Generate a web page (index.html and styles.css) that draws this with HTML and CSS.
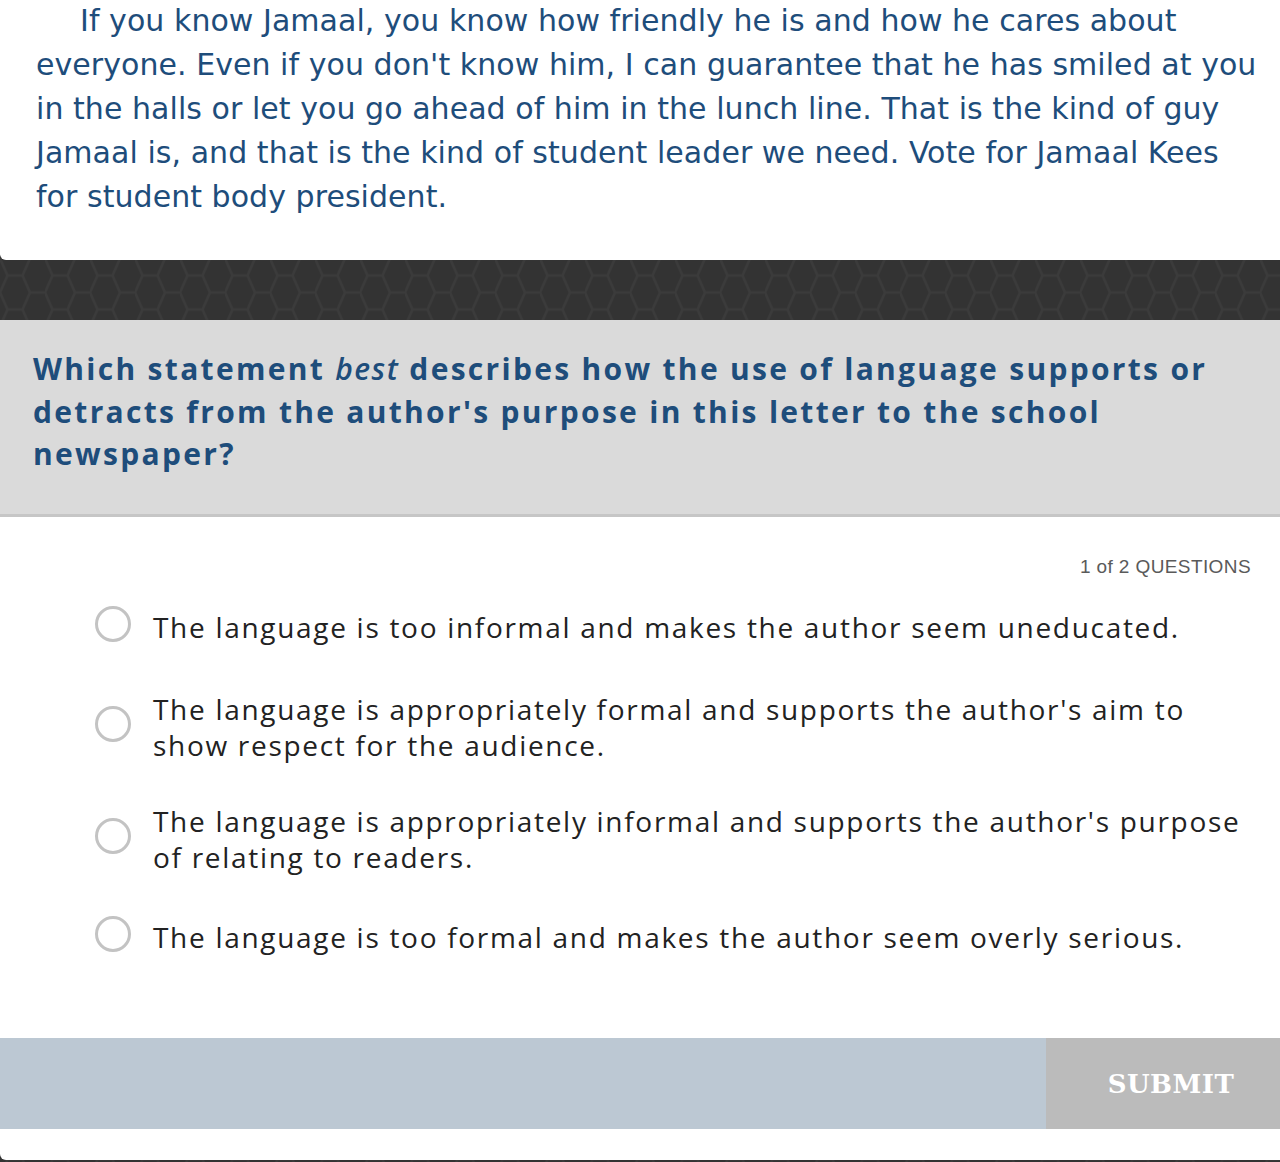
FILE: index.html
```html
<!DOCTYPE html>
<html lang="en">
<head>
<meta charset="utf-8">
<title>Question</title>
<link rel="stylesheet" href="styles.css">
</head>
<body>
<div class="page">
  <svg class="hexbg" aria-hidden="true">
    <defs>
      <pattern id="hex" width="45" height="34" patternUnits="userSpaceOnUse" x="0" y="3.5">
        <path d="M7.5,0 L22.5,0 L30,17 L22.5,34 L7.5,34 L0,17 Z M30,17 L45,17" fill="none" stroke="#3b3b3b" stroke-width="2.5"/>
      </pattern>
    </defs>
    <rect width="100%" height="100%" fill="#333333"/>
    <rect width="100%" height="100%" fill="url(#hex)"/>
  </svg>

  <section class="passage">
    <p>If you know Jamaal, you know how friendly he is and how he cares about everyone. Even if you don't know him, I can guarantee that he has smiled at you in the halls or let you go ahead of him in the lunch line. That is the kind of guy Jamaal is, and that is the kind of student leader we need. Vote for Jamaal Kees for student body president.</p>
  </section>

  <div class="band"></div>

  <section class="card">
    <div class="question">
      <p>Which statement <em>best</em> describes how the use of language supports or detracts from the author's purpose in this letter to the school newspaper?</p>
    </div>

    <div class="counter">1 of 2 QUESTIONS</div>

    <ul class="options">
      <li class="option"><span class="radio"></span><span class="label">The language is too informal and makes the author seem uneducated.</span></li>
      <li class="option"><span class="radio"></span><span class="label">The language is appropriately formal and supports the author's aim to show respect for the audience.</span></li>
      <li class="option"><span class="radio"></span><span class="label">The language is appropriately informal and supports the author's purpose of relating to readers.</span></li>
      <li class="option"><span class="radio"></span><span class="label">The language is too formal and makes the author seem overly serious.</span></li>
    </ul>

    <div class="actions">
      <div class="actions-fill"></div>
      <button class="submit" type="button">SUBMIT</button>
    </div>
  </section>
</div>
</body>
</html>
```

FILE: styles.css
```css
html, body {
  margin: 0;
  padding: 0;
}

body {
  background: #333333;
  width: 1280px;
  height: 1162px;
  overflow: hidden;
}

.page {
  position: relative;
  width: 1280px;
  height: 1162px;
}

.hexbg {
  position: absolute;
  left: 0;
  top: 0;
  width: 100%;
  height: 100%;
  z-index: 0;
}

.passage,
.band,
.card {
  position: relative;
  z-index: 1;
}

.passage {
  background: #ffffff;
  height: 260px;
  box-sizing: border-box;
  padding: 0 16px 0 36px;
  border-bottom-left-radius: 6px;
}

.passage p {
  margin: 0;
  font-family: "DejaVu Sans", "Noto Sans", sans-serif;
  font-size: 30px;
  line-height: 44px;
  color: #1e4d7b;
  text-indent: 44px;
  position: relative;
  top: -1px;
  letter-spacing: 0.05px;
}

.band {
  height: 60px;
}

.card {
  background: #ffffff;
  height: 840px;
  border-bottom-left-radius: 6px;
  display: flex;
  flex-direction: column;
}

.question {
  background: #dadada;
  border-bottom: 3px solid #c6c6c6;
  padding: 28px 30px 38px 33px;
}

.question p {
  margin: 0;
  font-family: "Open Sans", "Noto Sans", sans-serif;
  font-weight: 700;
  font-size: 30px;
  line-height: 42.5px;
  color: #1e4d7b;
  letter-spacing: 2.3px;
}

.question em {
  font-style: italic;
  font-weight: 600;
  letter-spacing: 1.5px;
}

.counter {
  margin-top: 39px;
  align-self: flex-end;
  margin-right: 29px;
  font-family: "Liberation Sans", Arial, sans-serif;
  font-size: 19px;
  line-height: 22px;
  color: #5a5a5a;
  letter-spacing: 0.4px;
}

.options {
  list-style: none;
  margin: 31px 0 0 0;
  padding: 0 20px 0 95px;
  display: flex;
  flex-direction: column;
  gap: 44px;
}

.option {
  display: flex;
  align-items: center;
  gap: 22px;
}

.option:nth-child(2) {
  margin-top: 2px;
}

.option:nth-child(3) {
  margin-top: -4px;
}

.radio {
  flex: 0 0 auto;
  width: 36px;
  height: 36px;
  box-sizing: border-box;
  border: 3px solid #c3c3c3;
  border-radius: 50%;
  background: #ffffff;
  margin-top: -6px;
}

.label {
  font-family: "Open Sans", "Noto Sans", sans-serif;
  font-size: 28px;
  line-height: 36px;
  color: #222222;
  letter-spacing: 1.7px;
}

.actions {
  margin-top: 83px;
  height: 91px;
  display: flex;
  background: #bcc8d3;
}

.actions-fill {
  flex: 1;
}

.submit {
  width: 234px;
  height: 91px;
  border: none;
  background: #bbbbbb;
  color: #ffffff;
  font-family: "DejaVu Serif", serif;
  font-weight: 700;
  font-size: 26px;
  letter-spacing: 0.5px;
  padding: 2px 0 0 16px;
  cursor: pointer;
}
```
